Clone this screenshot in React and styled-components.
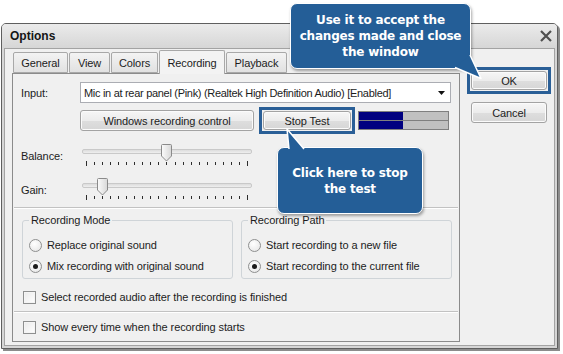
import React from 'react';
import styled, { createGlobalStyle } from 'styled-components';

const GlobalStyle = createGlobalStyle`
  html, body { margin: 0; padding: 0; background: #fff; }
  body {
    font-family: "Liberation Sans", Arial, sans-serif;
    font-size: 11px;
    letter-spacing: -0.1px;
    color: #1c1c1c;
  }
`;

const Page = styled.div`
  position: relative;
  width: 563px;
  height: 354px;
  overflow: hidden;
  box-sizing: border-box;
  padding: 23px 0 0 1px;
`;

const Window = styled.div`
  width: 557px;
  height: 326px;
  box-sizing: border-box;
  border: 1px solid #5f5f5f;
  border-radius: 5px 5px 0 0;
  background: #d6d6d6;
  box-shadow: 2px 2px 0 #8c8c8c;
  display: flex;
  flex-direction: column;
  padding: 0 2px 2px;
`;

const TitleBar = styled.div`
  height: 24px;
  margin: 0 -2px;
  padding: 0 4px 0 8px;
  display: flex;
  align-items: center;
  justify-content: space-between;
  background: linear-gradient(#ebebeb, #d6d6d6);
  border-radius: 4px 4px 0 0;
  font-weight: bold;
  font-size: 12px;
  letter-spacing: 0;
  color: #151515;
`;

const Client = styled.div`
  flex: 1;
  display: flex;
  gap: 7px;
  border: 1px solid #a3a3a3;
  background: #f0f0f0;
  padding: 1px 0 0 7px;
`;

const LeftCol = styled.div`
  width: 448px;
  display: flex;
  flex-direction: column;
`;

const TabRow = styled.div`
  height: 24px;
  display: flex;
  align-items: flex-end;
  gap: 1px;
  padding-left: 1px;
  position: relative;
  z-index: 1;
`;

const Tab = styled.div`
  box-sizing: border-box;
  width: ${p => p.$w}px;
  height: ${p => (p.$active ? 24 : 21)}px;
  margin-bottom: ${p => (p.$active ? 0 : 1)}px;
  display: flex;
  align-items: center;
  justify-content: center;
  border: 1px solid #a8a8a8;
  border-bottom: ${p => (p.$active ? 'none' : '1px solid #a8a8a8')};
  border-radius: 2px 2px 0 0;
  background: ${p => (p.$active ? '#f3f3f3' : 'linear-gradient(#f3f3f3, #e1e1e1)')};
  position: relative;
  z-index: ${p => (p.$active ? 2 : 1)};
`;

const Panel = styled.div`
  height: 269px;
  margin-top: -1px;
  box-sizing: border-box;
  border: 1px solid #8b8b8b;
  background: #f0f0f0;
  padding-left: 8px;
  display: flex;
  flex-direction: column;
`;

const Row = styled.div`
  display: flex;
  align-items: center;
  height: ${p => p.$h || 21}px;
  margin-top: ${p => p.$mt || 0}px;
  padding-left: ${p => p.$pl || 0}px;
`;

const Label = styled.div`
  width: ${p => p.$w}px;
  flex-shrink: 0;
`;

const Combo = styled.div`
  width: 371px;
  height: 21px;
  box-sizing: border-box;
  border: 1px solid #abadb3;
  background: #fff;
  display: flex;
  align-items: center;
  justify-content: space-between;
  padding: 0 5px 0 3px;
  letter-spacing: -0.3px;
`;

const Button = styled.div`
  width: ${p => p.$w}px;
  height: ${p => p.$h || 21}px;
  box-sizing: border-box;
  border: 1px solid #a3a3a3;
  border-radius: 3px;
  background: linear-gradient(#f6f6f6 0%, #ececec 50%, #dedede 51%, #d6d6d6 100%);
  box-shadow: inset 0 0 0 1px #fbfbfb;
  display: flex;
  align-items: center;
  justify-content: center;
  margin-left: ${p => p.$ml || 0}px;
  margin-top: ${p => p.$mt || 0}px;
`;

const Highlight = styled.div`
  display: flex;
  border: 3px solid #2a5f97;
  padding: 1px;
  margin: -4px 0 -4px ${p => p.$ml || 0}px;
`;

const Meter = styled.div`
  width: 91px;
  height: 19px;
  box-sizing: border-box;
  margin-left: 3px;
  border: 1px solid #7f7f7f;
  display: flex;
  flex-direction: column;
  gap: 1px;
  background: #7f7f7f;
`;

const MeterBar = styled.div`
  flex: 1;
  background: linear-gradient(90deg, #000080 0 50%, #c0c0c0 50% 100%);
`;

const SliderBox = styled.div`
  position: relative;
  width: 170px;
  height: 25px;
  display: flex;
  flex-direction: column;
`;

const Track = styled.div`
  height: 5px;
  margin-top: 6px;
  box-sizing: border-box;
  border: 1px solid #c9c9c9;
  border-radius: 2px;
  background: linear-gradient(#dcdcdc, #efefef);
`;

const Ticks = styled.div`
  display: flex;
  justify-content: space-between;
  align-items: flex-start;
  padding: 0 4px;
  margin-top: 8px;
`;

const Tick = styled.div`
  width: 1px;
  height: ${p => (p.$end ? 5 : 3)}px;
  margin-top: ${p => (p.$end ? -1 : 0)}px;
  background: #2d2d2d;
`;

const Thumb = styled.svg`
  position: absolute;
  top: 1px;
`;

const Separator = styled.div`
  height: 0;
  border-top: 1px solid #c2c2c2;
  border-bottom: 1px solid #ffffff;
  margin: ${p => p.$mt}px 1px 0 -7px;
`;

const Groups = styled.div`
  display: flex;
  gap: 8px;
  margin: 5px 0 0 1px;
`;

const Group = styled.fieldset`
  width: 211px;
  box-sizing: border-box;
  margin: 0;
  padding: 0 0 4px 6px;
  border: 1px solid #cfd4d8;
  border-radius: 3px;
  display: flex;
  flex-direction: column;
  gap: 5px;
`;

const Legend = styled.legend`
  padding: 0 2px;
  line-height: 13px;
`;

const Option = styled.div`
  display: flex;
  align-items: center;
  gap: 5px;
  height: 16px;
  margin-top: ${p => p.$mt || 0}px;
  margin-left: ${p => p.$ml || 0}px;
`;

const Radio = styled.div`
  width: 13px;
  height: 13px;
  box-sizing: border-box;
  border-radius: 50%;
  border: 1px solid #8e8f8f;
  background: radial-gradient(circle at 40% 35%, #ffffff, #e3e3e3);
  display: flex;
  align-items: center;
  justify-content: center;
  &::after {
    content: '';
    display: ${p => (p.$checked ? 'block' : 'none')};
    width: 5px;
    height: 5px;
    border-radius: 50%;
    background: #1a1a1a;
  }
`;

const Check = styled.div`
  width: 13px;
  height: 13px;
  box-sizing: border-box;
  border: 1px solid #8e8f8f;
  background: linear-gradient(135deg, #e9e9e9, #ffffff);
  box-shadow: inset 0 0 0 1px #f4f4f4;
`;

const RightCol = styled.div`
  width: 84px;
  margin-top: 21px;
  display: flex;
  flex-direction: column;
  align-items: flex-start;
`;

const Tip = styled.div`
  position: absolute;
  left: ${p => p.$x}px;
  top: ${p => p.$y}px;
  width: ${p => p.$w}px;
  height: ${p => p.$h}px;
  box-sizing: border-box;
  border: 1.5px solid #ffffff;
  border-radius: 7px;
  background: #245e97;
  box-shadow: 1px 2px 3px rgba(0, 0, 0, 0.35);
  display: flex;
  align-items: center;
  justify-content: center;
  text-align: center;
  color: #fff;
  font-family: "DejaVu Sans", Verdana, sans-serif;
  font-weight: bold;
  font-size: 12px;
  line-height: 16px;
  letter-spacing: -0.2px;
  z-index: 5;
`;

const Tail = styled.svg`
  position: absolute;
  left: ${p => p.$x}px;
  top: ${p => p.$y}px;
  z-index: 6;
  overflow: visible;
`;

const Slider = ({ value }) => (
  <SliderBox>
    <Track />
    <Ticks>
      {Array.from({ length: 21 }).map((_, i) => (
        <Tick key={i} $end={i === 0 || i === 20} />
      ))}
    </Ticks>
    <Thumb width="11" height="18" viewBox="0 0 11 18" style={{ left: 4 + value * 161 - 5.5 }}>
      <defs>
        <linearGradient id="thumbg" x1="0" y1="0" x2="1" y2="0">
          <stop offset="0" stopColor="#fbfbfb" />
          <stop offset="1" stopColor="#d8d8d8" />
        </linearGradient>
      </defs>
      <path d="M1.5 0.5 H9.5 Q10.5 0.5 10.5 1.5 V12 L5.5 17 L0.5 12 V1.5 Q0.5 0.5 1.5 0.5 Z" fill="url(#thumbg)" stroke="#8a8a8a" />
    </Thumb>
  </SliderBox>
);

const tabs = [
  { name: 'General', w: 55 },
  { name: 'View', w: 41 },
  { name: 'Colors', w: 47 },
  { name: 'Recording', w: 66, active: true },
  { name: 'Playback', w: 61 },
];

const App = () => (
  <Page>
    <GlobalStyle />
    <Window>
      <TitleBar>
        <span>Options</span>
        <svg width="14" height="14" viewBox="0 0 14 14">
          <path d="M2 2 L12 12 M12 2 L2 12" stroke="#505050" strokeWidth="2.2" />
        </svg>
      </TitleBar>
      <Client>
        <LeftCol>
          <TabRow>
            {tabs.map((t) => (
              <Tab key={t.name} $w={t.w} $active={t.active}>{t.name}</Tab>
            ))}
          </TabRow>
          <Panel>
            <Row $mt={8}>
              <Label $w={59}>Input:</Label>
              <Combo>
                <span>Mic in at rear panel (Pink) (Realtek High Definition Audio) [Enabled]</span>
                <svg width="7" height="4" viewBox="0 0 7 4">
                  <path d="M0 0 H7 L3.5 4 Z" fill="#111" />
                </svg>
              </Combo>
            </Row>
            <Row $mt={7} $pl={59}>
              <Button $w={174}>Windows recording control</Button>
              <Highlight $ml={5}>
                <Button $w={88} $h={19}>Stop Test</Button>
              </Highlight>
              <Meter>
                <MeterBar />
                <MeterBar />
              </Meter>
            </Row>
            <Row $mt={12} $h={25}>
              <Label $w={61}>Balance:</Label>
              <Slider value={0.5} />
            </Row>
            <Row $mt={9} $h={25}>
              <Label $w={61}>Gain:</Label>
              <Slider value={0.1} />
            </Row>
            <Separator $mt={5} />
            <Groups>
              <Group>
                <Legend>Recording Mode</Legend>
                <Option $mt={10}><Radio />Replace original sound</Option>
                <Option><Radio $checked />Mix recording with original sound</Option>
              </Group>
              <Group>
                <Legend>Recording Path</Legend>
                <Option $mt={10}><Radio />Start recording to a new file</Option>
                <Option><Radio $checked />Start recording to the current file</Option>
              </Group>
            </Groups>
            <Option $mt={10} $ml={2}><Check />Select recorded audio after the recording is finished</Option>
            <Separator $mt={6} />
            <Option $mt={6} $ml={2}><Check />Show every time when the recording starts</Option>
          </Panel>
        </LeftCol>
        <RightCol>
          <Highlight>
            <Button $w={76} $h={19}>OK</Button>
          </Highlight>
          <Button $w={76} $ml={4} $mt={12}>Cancel</Button>
        </RightCol>
      </Client>
    </Window>

    <Tip $x={290} $y={3} $w={181} $h={66}>
      Use it to accept the<br />changes made and close<br />the window
    </Tip>
    <Tail $x={450} $y={50} width="40" height="35">
      <path d="M5 17.5 L31 28.5 L20 5" fill="#245e97" stroke="#fff" strokeWidth="1.5" strokeLinejoin="round" />
    </Tail>

    <Tip $x={277} $y={147} $w={146} $h={67}>
      Click here to stop<br />the test
    </Tip>
    <Tail $x={280} $y={125} width="30" height="25">
      <path d="M9 24 L7 4 L24 24" fill="#245e97" stroke="#fff" strokeWidth="1.5" strokeLinejoin="round" />
    </Tail>
  </Page>
);

export default App;
